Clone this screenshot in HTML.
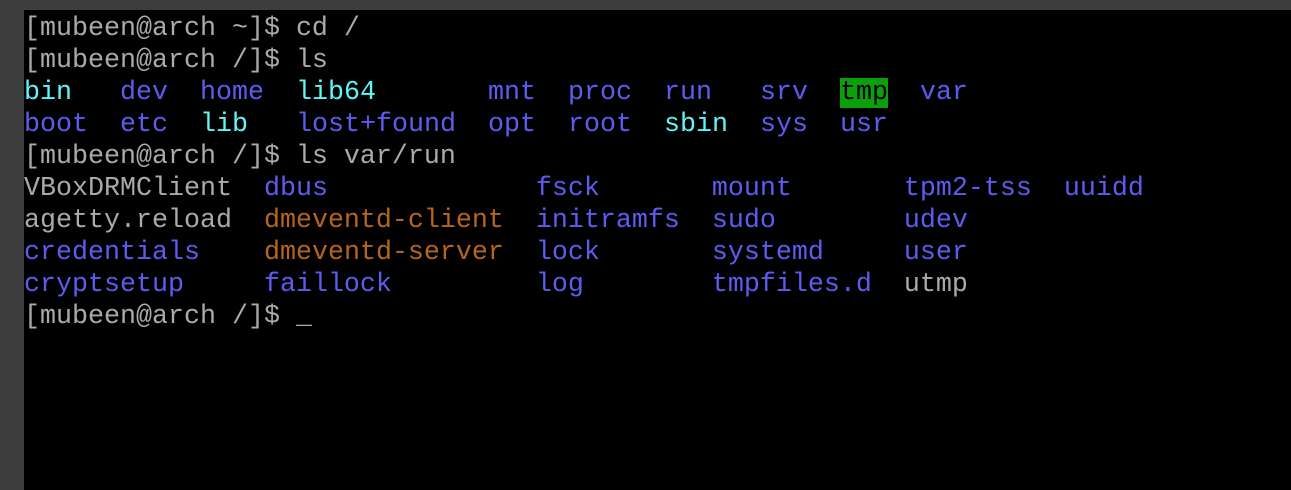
<!DOCTYPE html>
<html><head><meta charset="utf-8">
<style>
html,body{margin:0;padding:0;}
body{width:1291px;height:490px;background:#3d3d3d;position:relative;overflow:hidden;}
#term{position:absolute;left:24px;top:10px;right:0;bottom:0;background:#000;}
pre{margin:0;position:absolute;left:0;top:3px;font-family:"Liberation Mono",monospace;font-size:26.67px;line-height:32px;color:#aaaaaa;white-space:pre;}
.b{color:#5c5cf0}
.c{color:#5ff5f5}
.o{color:#b5651d}
.g{background:#0aa00a;color:#000}
</style></head><body>
<div id="term"><pre>[mubeen@arch ~]$ cd /
[mubeen@arch /]$ ls
<span class="c">bin</span>   <span class="b">dev</span>  <span class="b">home</span>  <span class="c">lib64</span>       <span class="b">mnt</span>  <span class="b">proc</span>  <span class="b">run</span>   <span class="b">srv</span>  <span class="g">tmp</span>  <span class="b">var</span>
<span class="b">boot</span>  <span class="b">etc</span>  <span class="c">lib</span>   <span class="b">lost+found</span>  <span class="b">opt</span>  <span class="b">root</span>  <span class="c">sbin</span>  <span class="b">sys</span>  <span class="b">usr</span>
[mubeen@arch /]$ ls var/run
VBoxDRMClient  <span class="b">dbus</span>             <span class="b">fsck</span>       <span class="b">mount</span>       <span class="b">tpm2-tss</span>  <span class="b">uuidd</span>
agetty.reload  <span class="o">dmeventd-client</span>  <span class="b">initramfs</span>  <span class="b">sudo</span>        <span class="b">udev</span>
<span class="b">credentials</span>    <span class="o">dmeventd-server</span>  <span class="b">lock</span>       <span class="b">systemd</span>     <span class="b">user</span>
<span class="b">cryptsetup</span>     <span class="b">faillock</span>         <span class="b">log</span>        <span class="b">tmpfiles.d</span>  utmp
[mubeen@arch /]$ _</pre></div>
</body></html>
